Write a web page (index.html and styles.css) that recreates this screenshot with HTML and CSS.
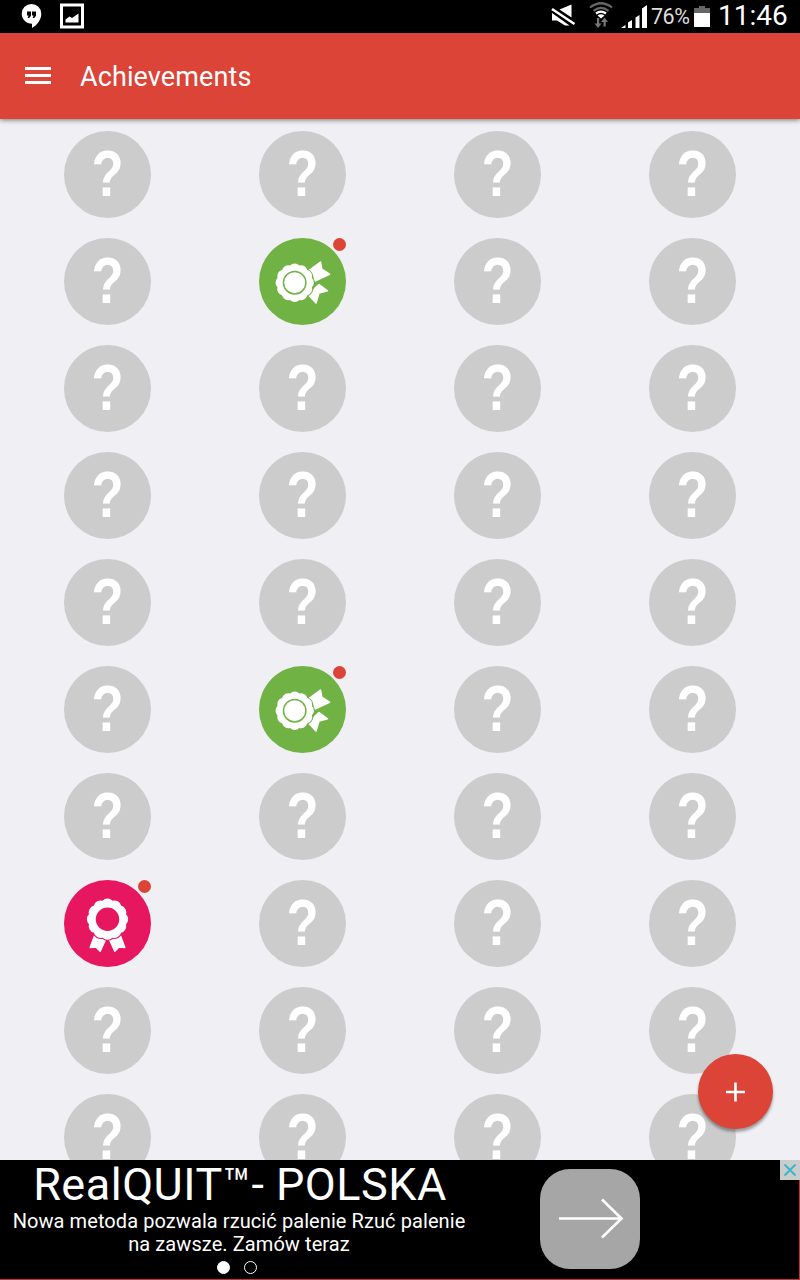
FILE: index.html
```html
<!DOCTYPE html>
<html lang="en">
<head>
<meta charset="utf-8">
<title>Achievements</title>
<link rel="stylesheet" href="styles.css">
</head>
<body>
<svg class="defs" aria-hidden="true">
  <defs>
    <path id="seal" d="M18.55 4.97A7 7 0 0 1 13.58 13.58A7 7 0 0 1 4.97 18.55A7 7 0 0 1 -4.97 18.55A7 7 0 0 1 -13.58 13.58A7 7 0 0 1 -18.55 4.97A7 7 0 0 1 -18.55 -4.97A7 7 0 0 1 -13.58 -13.58A7 7 0 0 1 -4.97 -18.55A7 7 0 0 1 4.97 -18.55A7 7 0 0 1 13.58 -13.58A7 7 0 0 1 18.55 -4.97A7 7 0 0 1 18.55 4.97Z"/>
    <symbol id="medal-side" viewBox="0 0 87 87">
      <g fill="#fff" stroke="#fff" stroke-width="1.5" stroke-linejoin="round">
        <path d="M50.5 32L61.5 24L62.8 31.2L70.5 36.2L56 43Q55 35 50.500 32Z"/>
        <path d="M56 50L60 46.500L68.500 52.800L60 55L57 65L50 57.500Q54 55 56 50Z"/>
      </g>
      <use href="#seal" fill="#fff" stroke="#70b244" stroke-width="2" paint-order="stroke" transform="translate(35.700 44.700) scale(.93)"/>
      <circle cx="35.700" cy="44.700" r="11.200" fill="none" stroke="#70b244" stroke-width="1.500"/>
    </symbol>
    <symbol id="medal" viewBox="0 0 87 87">
      <g fill="#fff" stroke="#fff" stroke-width="1.500" stroke-linejoin="round">
        <path d="M30.500 56L26.200 67.500L32 67L36.200 71.300L42 58.500Q35 59 30.500 56Z"/>
        <path d="M56.500 56L60.800 67.500L55 67L50.800 71.300L45 58.500Q52 59 56.500 56Z"/>
      </g>
      <use href="#seal" fill="#fff" stroke="#e6175f" stroke-width="2" paint-order="stroke" transform="translate(43.500 39.200)"/>
      <circle cx="43.500" cy="39.200" r="11.700" fill="#e6175f"/>
    </symbol>
  </defs>
</svg>
<div class="screen">
  <header class="status">
    <svg class="status-left" width="90" height="33" viewBox="0 0 90 33">
      <path fill="#fff" d="M31.500 4a9.800 9.800 0 0 0-9.800 9.800c0 5.600 4.500 9.900 10.300 9.900V28c5.200-2.700 9.300-8.400 9.300-14.200A9.800 9.800 0 0 0 31.500 4z"/>
      <path d="M27 11.500h4v4.200l-1.800 2.300h-1.500l.8-2.500H27zM32 11.500h4v4.200L34.200 18h-1.500l.8-2.500H32z"/>
      <path fill="none" stroke="#fff" stroke-width="3" d="M61.500 5h21v22h-21z"/>
      <path fill="#fff" d="M65.500 22.500v-3l4-3 2.500 1.500 6.500-4.500v9z"/>
    </svg>
    <div class="status-right">
      <svg width="100" height="33" viewBox="550 0 100 33">
        <path fill="#fff" d="M559.500 9.500L571.500 4.500V17.500zM552 13L569.500 25.500H565L557 20.500H552z"/>
        <path stroke="#fff" stroke-width="2.600" d="M552 9L574.500 24"/>
        <path stroke="#000" stroke-width="1" d="M552 11.200L574.500 26.700"/>
        <path fill="none" stroke="#666" stroke-width="2.200" d="M590 7.500Q601 -1 612 7.500M593.500 10.800Q601 5 608.500 10.800"/>
        <path fill="none" stroke="#fff" stroke-width="2.200" d="M596 13.500Q601 9.700 606 13.500"/>
        <path fill="#fff" d="M597.500 15.500Q601 13 604.500 15.500L601 18.500z"/>
        <path fill="#777" d="M597 18h2.200v5.500h2.300L598 28l-3.500-4.500H597zM603.500 26.500h2.200V22h2.300l-3.500-4.500-3.500 4.500h2.500z"/>
        <path fill="#fff" d="M621 28l4.500-3v3zM628 28v-5.500l4-2.500v8zM635.500 28V17.500l4-2.500v13zM642 28V8.500L647 5v23z"/>
      </svg>
      <span class="percent">76%</span>
      <svg class="battery" width="16" height="21" viewBox="0 0 16 21"><path fill="#666" d="M5 0h6v2h5v6H0V2h5z"/><path fill="#fff" d="M0 7h16v14H0z"/></svg>
      <span class="clock">11:46</span>
    </div>
  </header>
  <div class="toolbar">
    <div class="menu"><i></i><i></i><i></i></div>
    <h1 class="title">Achievements</h1>
  </div>
  <main class="content">
    <div class="grid">
      <div class="badge"><b>?</b></div><div class="badge"><b>?</b></div><div class="badge"><b>?</b></div><div class="badge"><b>?</b></div>
      <div class="badge"><b>?</b></div><div class="badge green"><svg><use href="#medal-side"/></svg></div><div class="badge"><b>?</b></div><div class="badge"><b>?</b></div>
      <div class="badge"><b>?</b></div><div class="badge"><b>?</b></div><div class="badge"><b>?</b></div><div class="badge"><b>?</b></div>
      <div class="badge"><b>?</b></div><div class="badge"><b>?</b></div><div class="badge"><b>?</b></div><div class="badge"><b>?</b></div>
      <div class="badge"><b>?</b></div><div class="badge"><b>?</b></div><div class="badge"><b>?</b></div><div class="badge"><b>?</b></div>
      <div class="badge"><b>?</b></div><div class="badge green"><svg><use href="#medal-side"/></svg></div><div class="badge"><b>?</b></div><div class="badge"><b>?</b></div>
      <div class="badge"><b>?</b></div><div class="badge"><b>?</b></div><div class="badge"><b>?</b></div><div class="badge"><b>?</b></div>
      <div class="badge pink"><svg><use href="#medal"/></svg></div><div class="badge"><b>?</b></div><div class="badge"><b>?</b></div><div class="badge"><b>?</b></div>
      <div class="badge"><b>?</b></div><div class="badge"><b>?</b></div><div class="badge"><b>?</b></div><div class="badge"><b>?</b></div>
      <div class="badge"><b>?</b></div><div class="badge"><b>?</b></div><div class="badge"><b>?</b></div><div class="badge"><b>?</b></div>
    </div>
    <div class="fab"><svg width="19" height="20" viewBox="0 0 19 20"><path stroke="#fff" stroke-width="2.600" d="M0 10h19M9.500 .5v19"/></svg></div>
  </main>
  <footer class="ad">
    <div class="ad-copy">
      <div class="ad-title">RealQUIT™- POLSKA</div>
      <div class="ad-text"><span>Nowa metoda pozwala rzucić palenie Rzuć palenie</span><br><span>na zawsze. Zamów teraz</span></div>
      <div class="dots"><i class="on"></i><i></i></div>
    </div>
    <div class="go"><svg width="100" height="100" viewBox="0 0 100 100"><path fill="none" stroke="#fff" stroke-width="2.600" d="M19 49.500h62M62 30.500l19.500 19-19.500 19"/></svg></div>
    <div class="close"><svg width="20" height="20" viewBox="0 0 20 20"><path stroke="#3bb6cc" stroke-width="2" d="M4.500 4.500l11 11M15.500 4.500l-11 11"/></svg></div>
  </footer>
</div>
</body>
</html>
```

FILE: styles.css
```css
* { box-sizing: border-box; }
body { margin: 0; font-family: Roboto, sans-serif; color: #fff; background: #efeff4; }
svg { display: block; }
.defs { position: absolute; width: 0; height: 0; }
.screen { width: 800px; height: 1280px; display: flex; flex-direction: column; overflow: hidden; }
.status { height: 33px; flex: none; background: #000; display: flex; justify-content: space-between; }
.status-right { display: flex; align-items: center; white-space: nowrap; width: 250px; }
.percent { font-size: 21.500px; width: 41px; margin-left: 1px; letter-spacing: -.5px; color: #ddd; }
.battery { margin: 0 0 0 2px; }
.clock { font-size: 28px; line-height: 32px; margin: -2px 0 0 8px; }
.toolbar { height: 86px; flex: none; background: #db4437; display: flex; align-items: center; padding-left: 25px; box-shadow: 0 1px 5px rgba(0,0,0,.5); z-index: 1; }
.menu { width: 26px; display: grid; gap: 4px; margin-top: -1px; }
.menu i { height: 3px; background: #fff; }
.title { margin: 2px 0 0 29px; font-size: 27px; font-weight: 400; line-height: 32px; letter-spacing: .1px; }
.content { height: 1041px; flex: none; position: relative; overflow: hidden; padding: 12px 10px 0; }
.grid { display: grid; grid-template-columns: repeat(4, 195px); grid-auto-rows: 87px; row-gap: 20px; justify-items: center; }
.badge { width: 87px; height: 87px; border-radius: 50%; background: #ccc; display: flex; align-items: center; justify-content: center; position: relative; }
.badge b { font: bold 64px/87px "Liberation Sans", sans-serif; transform: scaleX(.82); padding-left: 1px; }
.badge svg { width: 87px; height: 87px; }
.green { background: #70b244; }
.pink { background: #e6175f; }
.green::after, .pink::after { content: ""; position: absolute; top: 0; right: 0; width: 13px; height: 13px; border-radius: 50%; background: #db4437; }
.fab { position: absolute; right: 27px; bottom: 31px; width: 75px; height: 75px; border-radius: 50%; background: #db4437; box-shadow: 0 3px 3px rgba(0,0,0,.35); display: flex; align-items: center; justify-content: center; }
.ad { height: 120px; flex: none; background: #000; border-bottom: 1px solid #c4302f; border-right: 1px solid #c4302f; display: flex; position: relative; }
.ad-copy { width: 480px; flex: none; text-align: center; white-space: nowrap; }
.ad-title { font-size: 45px; line-height: 50px; letter-spacing: .5px; }
.ad-text { font-size: 20px; line-height: 23px; letter-spacing: .08px; padding-right: 2px; }
.dots { display: flex; gap: 14px; justify-content: center; margin-top: 5px; padding-right: 6px; }
.dots i { width: 13px; height: 13px; border: 1.500px solid #fff; border-radius: 50%; }
.dots .on { background: #fff; }
.go { width: 100px; height: 100px; margin: 9px 0 0 60px; border-radius: 30px; background: #a6a6a6; }
.close { position: absolute; top: 0; right: -1px; width: 20px; height: 20px; background: #ccc; }
```
